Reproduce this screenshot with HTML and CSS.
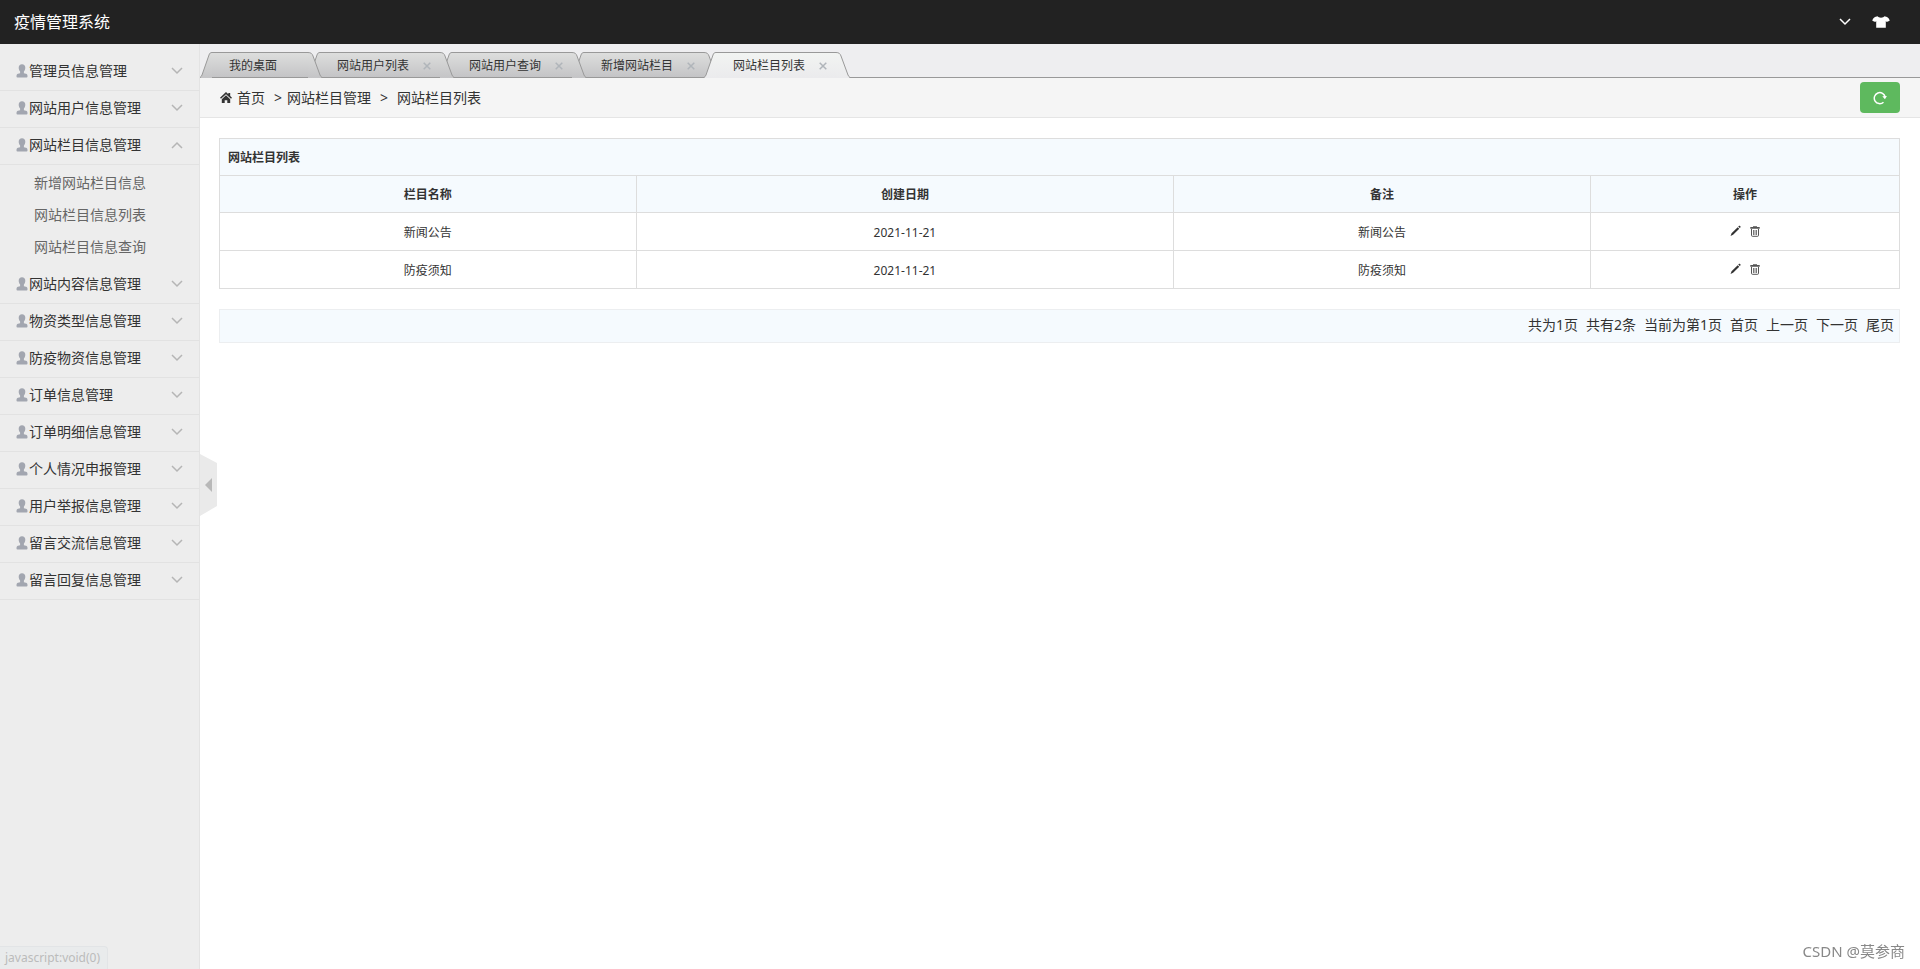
FILE: index.html
```html
<!DOCTYPE html>
<html lang="zh-CN">
<head>
  <meta charset="UTF-8">
  <meta name="viewport" content="width=device-width, initial-scale=1.0">
  <title>疫情管理系统</title>
  <link rel="stylesheet" href="styles.css">
</head>
<body>
  <!-- 图标 -->
  <svg class="sprite" aria-hidden="true">
    <symbol id="i-user" viewBox="0 0 12 14">
      <path d="M6 .3C3.900.3 2.700 1.700 2.700 3.800c0 1.500.5 2.900 1.400 3.700v1.700L2 9.800C1 10.100.5 10.900.5 12v.6c0 .6.3.9.9.9h9.200c.6 0 .9-.3.9-.9V12c0-1.100-.5-1.900-1.500-2.200l-2.100-.6V7.500c.9-.8 1.400-2.200 1.400-3.700C9.300 1.700 8.100.3 6 .3z"/>
    </symbol>
    <symbol id="i-down" viewBox="0 0 12 8"><path d="M1 1l5 5 5-5" fill="none" stroke="currentColor" stroke-width="1.500"/></symbol>
    <symbol id="i-up" viewBox="0 0 12 8"><path d="M1 7l5-5 5 5" fill="none" stroke="currentColor" stroke-width="1.500"/></symbol>
    <symbol id="i-close" viewBox="0 0 8 8"><path d="M.7.7l6.600 6.600M7.300.7L.7 7.300" fill="none" stroke="currentColor" stroke-width="1.500"/></symbol>
    <symbol id="i-edge-l" viewBox="0 0 12 26">
      <path class="edge-fill" d="M0 26C1 25 1.500 24 2 23L9 3C9.600 1.200 10.400.5 12 .5V26z"/>
      <path class="edge-line" d="M0 25.500C1 25 1.500 24 2 23L9 3C9.600 1.200 10.400.5 12 .5"/>
    </symbol>
    <symbol id="i-edge-r" viewBox="0 0 14 26">
      <path class="edge-fill" d="M14 26C13 25 12.500 24 12 23L5 4C4.200 1.600 2.800.5 0 .5V26z"/>
      <path class="edge-line" d="M14 25.500C13 25 12.500 24 12 23L5 4C4.200 1.600 2.800.5 0 .5"/>
    </symbol>
    <symbol id="i-pen" viewBox="0 0 12 12"><path d="M9 1.200l.6-.7c.4-.4.900-.4 1.300 0l.4.4c.4.4.4.900 0 1.300l-.7.600zM8.400 1.800l1.700 1.700-6.700 6.700L.6 11.500l1.100-3z"/></symbol>
    <symbol id="i-trash" viewBox="0 0 10 11">
      <path d="M3 1V.2h4V1h2.700v1.800H.3V1z"/>
      <path d="M1.500 3v6.300c0 .7.300 1 .9 1h5.200c.6 0 .9-.3.900-1V3" fill="none" stroke="currentColor"/>
      <path d="M3.500 4v5M5 4v5M6.500 4v5" fill="none" stroke="currentColor" stroke-width=".8"/>
    </symbol>
    <linearGradient id="tab-grey" x1="0" y1="0" x2="0" y2="1"><stop offset="0" stop-color="#dddedd"/><stop offset="1" stop-color="#c4c4c6"/></linearGradient>
    <linearGradient id="tab-light" x1="0" y1="0" x2="0" y2="1"><stop offset="0" stop-color="#f2f4f2"/><stop offset="1" stop-color="#ebebed"/></linearGradient>
  </svg>

  <header class="header">
    <h1 class="logo">疫情管理系统</h1>
    <div class="header-tools">
      <button class="tool" type="button" aria-label="用户菜单"><svg class="tool-down"><use href="#i-down"/></svg></button>
      <button class="tool" type="button" aria-label="换肤">
        <svg class="tool-skin" viewBox="0 0 18 12"><path d="M5.500.3C6.500 2.200 11.500 2.200 12.500.3L15 .9c1.500.7 2.300 2 2.700 3.800L14.700 6l-.9-1v6.800H4.200V5l-.9 1-3-1.300C.7 2.900 1.500 1.600 3 .9z"/></svg>
      </button>
    </div>
  </header>

  <div class="layout">
    <nav class="sidebar">
      <button class="menu" type="button"><svg class="user"><use href="#i-user"/></svg>管理员信息管理<svg class="arrow"><use href="#i-down"/></svg></button>
      <button class="menu" type="button"><svg class="user"><use href="#i-user"/></svg>网站用户信息管理<svg class="arrow"><use href="#i-down"/></svg></button>
      <button class="menu" type="button"><svg class="user"><use href="#i-user"/></svg>网站栏目信息管理<svg class="arrow"><use href="#i-up"/></svg></button>
      <ul class="submenu">
        <li><a href="#">新增网站栏目信息</a></li>
        <li><a href="#">网站栏目信息列表</a></li>
        <li><a href="#">网站栏目信息查询</a></li>
      </ul>
      <button class="menu" type="button"><svg class="user"><use href="#i-user"/></svg>网站内容信息管理<svg class="arrow"><use href="#i-down"/></svg></button>
      <button class="menu" type="button"><svg class="user"><use href="#i-user"/></svg>物资类型信息管理<svg class="arrow"><use href="#i-down"/></svg></button>
      <button class="menu" type="button"><svg class="user"><use href="#i-user"/></svg>防疫物资信息管理<svg class="arrow"><use href="#i-down"/></svg></button>
      <button class="menu" type="button"><svg class="user"><use href="#i-user"/></svg>订单信息管理<svg class="arrow"><use href="#i-down"/></svg></button>
      <button class="menu" type="button"><svg class="user"><use href="#i-user"/></svg>订单明细信息管理<svg class="arrow"><use href="#i-down"/></svg></button>
      <button class="menu" type="button"><svg class="user"><use href="#i-user"/></svg>个人情况申报管理<svg class="arrow"><use href="#i-down"/></svg></button>
      <button class="menu" type="button"><svg class="user"><use href="#i-user"/></svg>用户举报信息管理<svg class="arrow"><use href="#i-down"/></svg></button>
      <button class="menu" type="button"><svg class="user"><use href="#i-user"/></svg>留言交流信息管理<svg class="arrow"><use href="#i-down"/></svg></button>
      <button class="menu" type="button"><svg class="user"><use href="#i-user"/></svg>留言回复信息管理<svg class="arrow"><use href="#i-down"/></svg></button>
    </nav>

    <main class="main">
      <ul class="tabs">
        <li class="tab">
          <svg class="edge"><use href="#i-edge-l"/></svg>
          <div class="tab-body"><a href="#">我的桌面</a></div>
          <svg class="edge edge-right"><use href="#i-edge-r"/></svg>
        </li>
        <li class="tab">
          <svg class="edge"><use href="#i-edge-l"/></svg>
          <div class="tab-body"><a href="#">网站用户列表</a><button class="close" type="button" aria-label="关闭"><svg><use href="#i-close"/></svg></button></div>
          <svg class="edge edge-right"><use href="#i-edge-r"/></svg>
        </li>
        <li class="tab">
          <svg class="edge"><use href="#i-edge-l"/></svg>
          <div class="tab-body"><a href="#">网站用户查询</a><button class="close" type="button" aria-label="关闭"><svg><use href="#i-close"/></svg></button></div>
          <svg class="edge edge-right"><use href="#i-edge-r"/></svg>
        </li>
        <li class="tab">
          <svg class="edge"><use href="#i-edge-l"/></svg>
          <div class="tab-body"><a href="#">新增网站栏目</a><button class="close" type="button" aria-label="关闭"><svg><use href="#i-close"/></svg></button></div>
          <svg class="edge edge-right"><use href="#i-edge-r"/></svg>
        </li>
        <li class="tab active">
          <svg class="edge"><use href="#i-edge-l"/></svg>
          <div class="tab-body"><a href="#">网站栏目列表</a><button class="close" type="button" aria-label="关闭"><svg><use href="#i-close"/></svg></button></div>
          <svg class="edge edge-right"><use href="#i-edge-r"/></svg>
        </li>
      </ul>

      <div class="breadcrumb">
        <svg class="home" viewBox="0 0 12 11"><path d="M6 0l2.300 2.200V1h1.900v3L12 5.700l-1 1.100-5-4.600-5 4.600-1-1.100z"/><path d="M6 3.300l4.200 3.900V11H7.300V8.200H4.700V11H1.800V7.200z"/></svg>
        <a href="#">首页</a>
        <span class="sep">&gt;</span>
        <span>网站栏目管理</span>
        <span class="sep wide">&gt;</span>
        <span>网站栏目列表</span>
        <button class="refresh" type="button" aria-label="刷新">
          <svg viewBox="0 0 14 14"><path d="M10.500 11.200A5.500 5.500 0 1 1 12.200 6.200" fill="none" stroke="currentColor" stroke-width="1.500"/><path d="M9.300 5.200l4.600-.3-2 3.400z"/></svg>
        </button>
      </div>

      <div class="content">
        <table class="list">
          <colgroup><col class="col-name"><col class="col-date"><col class="col-note"><col></colgroup>
          <thead>
            <tr><th class="list-title" colspan="4">网站栏目列表</th></tr>
            <tr><th>栏目名称</th><th>创建日期</th><th>备注</th><th>操作</th></tr>
          </thead>
          <tbody>
            <tr>
              <td>新闻公告</td><td>2021-11-21</td><td>新闻公告</td>
              <td><div class="actions"><a href="#" aria-label="编辑"><svg class="pen"><use href="#i-pen"/></svg></a><a href="#" aria-label="删除"><svg class="trash"><use href="#i-trash"/></svg></a></div></td>
            </tr>
            <tr>
              <td>防疫须知</td><td>2021-11-21</td><td>防疫须知</td>
              <td><div class="actions"><a href="#" aria-label="编辑"><svg class="pen"><use href="#i-pen"/></svg></a><a href="#" aria-label="删除"><svg class="trash"><use href="#i-trash"/></svg></a></div></td>
            </tr>
          </tbody>
        </table>

        <div class="pager">
          <span>共为1页</span>
          <span>共有2条</span>
          <span>当前为第1页</span>
          <a href="#">首页</a>
          <a href="#">上一页</a>
          <a href="#">下一页</a>
          <a href="#">尾页</a>
        </div>
      </div>
    </main>
  </div>

  <button class="fold" type="button" aria-label="收起菜单">
    <svg viewBox="0 0 17 62"><path d="M0 0l17 9v43L0 62z" fill="#eaeaea"/><path d="M5 31l7-7v14z" fill="#b8b8b8"/></svg>
  </button>
  <div class="status">javascript:void(0)</div>
  <div class="watermark">CSDN @莫参商</div>
</body>
</html>
```
FILE: styles.css
```css
* {
  box-sizing: border-box;
}

body {
  margin: 0;
  min-height: 100vh;
  display: flex;
  flex-direction: column;
  font-family: "Noto Sans", "Noto Sans CJK SC", sans-serif;
  font-size: 14px;
  line-height: 20px;
  color: #333;
  background: #fff;
}

a {
  color: inherit;
  text-decoration: none;
}

button {
  padding: 0;
  border: 0;
  background: none;
  font: inherit;
  color: inherit;
  cursor: pointer;
}

ul {
  margin: 0;
  padding: 0;
  list-style: none;
}

svg {
  display: block;
  fill: currentColor;
}

.sprite {
  position: absolute;
  width: 0;
  height: 0;
}

/* 顶部 */
.header {
  display: flex;
  align-items: center;
  justify-content: space-between;
  height: 44px;
  padding: 0 30px 0 14px;
  background: #222;
  color: #fff;
}

.logo {
  margin: 0;
  font-size: 16px;
  font-weight: 400;
}

.header-tools {
  display: flex;
  align-items: center;
  gap: 21px;
}

.tool-down {
  width: 12px;
  height: 8px;
}

.tool-skin {
  width: 18px;
  height: 12px;
}

.layout {
  flex: 1;
  display: flex;
}

/* 左侧菜单 */
.sidebar {
  flex: none;
  width: 200px;
  padding-top: 10px;
  background: #ededed;
  border-right: 1px solid #e3e3e3;
}

.menu {
  display: flex;
  align-items: center;
  width: 100%;
  height: 37px;
  padding: 0 16px 2px;
  border-bottom: 1px solid #e2e2e2;
}

.user {
  width: 12px;
  height: 14px;
  margin-right: 1px;
  color: #a2a6b0;
}

.arrow {
  width: 12px;
  height: 8px;
  margin-left: auto;
  color: #b5b5b5;
}

.submenu {
  padding: 2px 0 4px;
}

.submenu a {
  display: block;
  padding-left: 34px;
  line-height: 32px;
  color: #666;
}

/* 标签页 */
.main {
  flex: 1;
  min-width: 0;
}

.tabs {
  display: flex;
  height: 34px;
  padding-top: 8px;
  background: linear-gradient(#999, #999) bottom / 100% 1px no-repeat #eeeef0;
}

.tab {
  position: relative;
  display: flex;
  height: 26px;
  font-size: 12px;
  --tab-fill: url(#tab-grey);
}

.tab + .tab {
  margin-left: -14px;
}

.tab:nth-child(1) { z-index: 5; }
.tab:nth-child(2) { z-index: 4; }
.tab:nth-child(3) { z-index: 3; }
.tab:nth-child(4) { z-index: 2; }

.tab.active {
  z-index: 6;
  --tab-fill: url(#tab-light);
}

.edge {
  width: 12px;
  height: 26px;
}

.edge-right {
  width: 14px;
}

.edge-fill {
  fill: var(--tab-fill);
}

.edge-line {
  fill: none;
  stroke: #999;
}

.tab-body {
  display: flex;
  align-items: center;
  padding: 2px 31px 0 17px;
  border-top: 1px solid #999;
  border-bottom: 1px solid #999;
  background: linear-gradient(#dddedd, #c4c4c6);
}

.tab.active .tab-body {
  border-bottom-color: #ebebed;
  background: linear-gradient(#f2f4f2, #ebebed);
}

.close {
  margin: 0 -22px 0 14px;
  color: #b0b5ba;
}

.close svg {
  width: 8px;
  height: 8px;
}

/* 面包屑 */
.breadcrumb {
  display: flex;
  align-items: center;
  height: 40px;
  padding: 0 20px;
  background: #f5f5f5;
  border-bottom: 1px solid #e5e5e5;
}

.home {
  width: 12px;
  height: 11px;
  margin-right: 5px;
}

.sep {
  margin: 0 5px 0 9px;
}

.sep.wide {
  margin-right: 9px;
}

.refresh {
  display: flex;
  align-items: center;
  justify-content: center;
  width: 40px;
  height: 31px;
  margin-left: auto;
  border-radius: 4px;
  background: #5eb95e;
  color: #fff;
}

.refresh svg {
  width: 14px;
  height: 14px;
}

/* 列表 */
.content {
  padding: 20px 20px 20px 19px;
}

.list {
  width: 100%;
  table-layout: fixed;
  border-collapse: collapse;
  font-size: 12px;
}

.col-name,
.col-note {
  width: 24.8%;
}

.col-date {
  width: 32%;
}

.list th,
.list td {
  padding: 9px 8px 7px;
  border: 1px solid #ddd;
  text-align: center;
}

.list th {
  height: 37px;
  background: #f5fafe;
}

.list td {
  height: 38px;
}

.list .list-title {
  text-align: left;
}

.actions {
  display: flex;
  align-items: center;
  justify-content: center;
  gap: 9px;
  padding-bottom: 3px;
}

.pen {
  width: 11px;
  height: 12px;
}

.trash {
  width: 10px;
  height: 11px;
  color: #555;
}

.pager {
  display: flex;
  justify-content: flex-end;
  gap: 8px;
  margin-top: 20px;
  padding: 5px 5px 7px;
  border: 1px solid #eceef0;
  background: #f5fafe;
}

/* 收起菜单 */
.fold {
  position: fixed;
  top: 50%;
  left: 200px;
  transform: translateY(-50%);
}

.fold svg {
  width: 17px;
  height: 62px;
}

.status {
  position: fixed;
  left: 0;
  bottom: 0;
  padding: 1px 7px 1px 5px;
  border: 1px solid #e2e4e6;
  border-width: 1px 1px 0 0;
  border-radius: 0 4px 0 0;
  background: #e9ebec;
  font-size: 12px;
  color: #bbb;
}

.watermark {
  position: fixed;
  right: 15px;
  bottom: 8px;
  font-size: 15px;
  color: #888;
}
```
